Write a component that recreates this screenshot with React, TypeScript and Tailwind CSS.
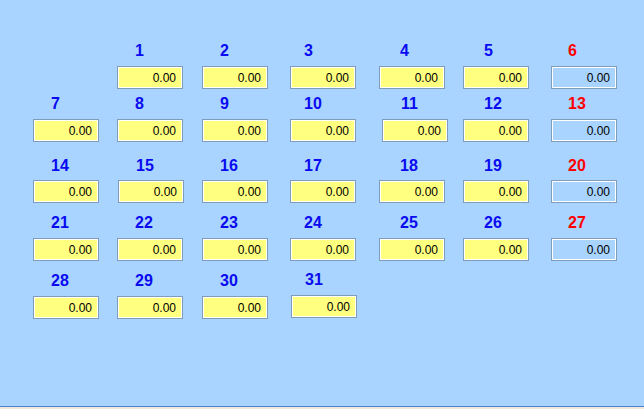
import React from 'react';

// column label offsets (text start relative to box left)
const labelPad = ['pl-[18px]', 'pl-[18px]', 'pl-[18px]', 'pl-[14px]', 'pl-[21px]', 'pl-[21px]', 'pl-[17px]'];

interface CellProps {
  day: number;
  col: number;
  labelGap?: string;
  shift?: string;
  labelShift?: string;
}

function DayCell({ day, col, labelGap = 'h-[23px]', shift = '', labelShift = '' }: CellProps) {
  const weekend = col === 6;
  return (
    <div className={`flex flex-col ${shift}`}>
      <div className={`${labelGap} ${labelPad[col]} ${labelShift}`}>
        <span className={`block text-[16px] leading-[16px] font-bold ${weekend ? 'text-[#ff0000]' : 'text-[#0a0af0]'}`}>
          {day}
        </span>
      </div>
      <div
        className={`w-[66px] h-[23px] border border-[#7f9db9] shadow-[inset_0_0_0_1px_#ffffff] flex items-center justify-end pr-[6px] text-[12px] text-black ${
          weekend ? 'bg-[#a8d4ff]' : 'bg-[#ffff80]'
        }`}
      >
        0.00
      </div>
    </div>
  );
}

const rows: { days: (number | null)[]; mt: string; gap?: string }[] = [
  { days: [null, 1, 2, 3, 4, 5, 6], mt: 'mt-[43px]' },
  { days: [7, 8, 9, 10, 11, 12, 13], mt: 'mt-[7px]' },
  { days: [14, 15, 16, 17, 18, 19, 20], mt: 'mt-[16px]', gap: 'h-[22px]' },
  { days: [21, 22, 23, 24, 25, 26, 27], mt: 'mt-[12px]' },
  { days: [28, 29, 30, 31, null, null, null], mt: 'mt-[12px]' },
];

// small per-cell nudges, the form was laid out by hand
const nudges: Record<number, string> = {
  11: 'ml-[3px]',
  15: 'ml-[1px]',
  31: 'ml-[1px] -mt-[1px]',
};

const labelNudges: Record<number, string> = {
  11: '-ml-[2px]',
};

export default function App() {
  return (
    <div className="w-[644px] h-[409px] flex flex-col" style={{ fontFamily: '"Liberation Sans", Arial, sans-serif' }}>
      <div className="h-[407px] bg-[#a8d4ff] border-b border-[#4f7fd6] pl-[33px]">
        {rows.map((row, ri) => (
          <div key={ri} className={`grid grid-cols-[84px_85px_88px_89px_84px_88px_66px] ${row.mt}`}>
            {row.days.map((d, ci) =>
              d === null ? (
                <div key={ci} />
              ) : (
                <DayCell
                  key={ci}
                  day={d}
                  col={ci}
                  labelGap={row.gap}
                  shift={nudges[d] || ''}
                  labelShift={labelNudges[d] || ''}
                />
              )
            )}
          </div>
        ))}
      </div>
      <div className="flex-1 bg-[#f0e8d8]" />
    </div>
  );
}
